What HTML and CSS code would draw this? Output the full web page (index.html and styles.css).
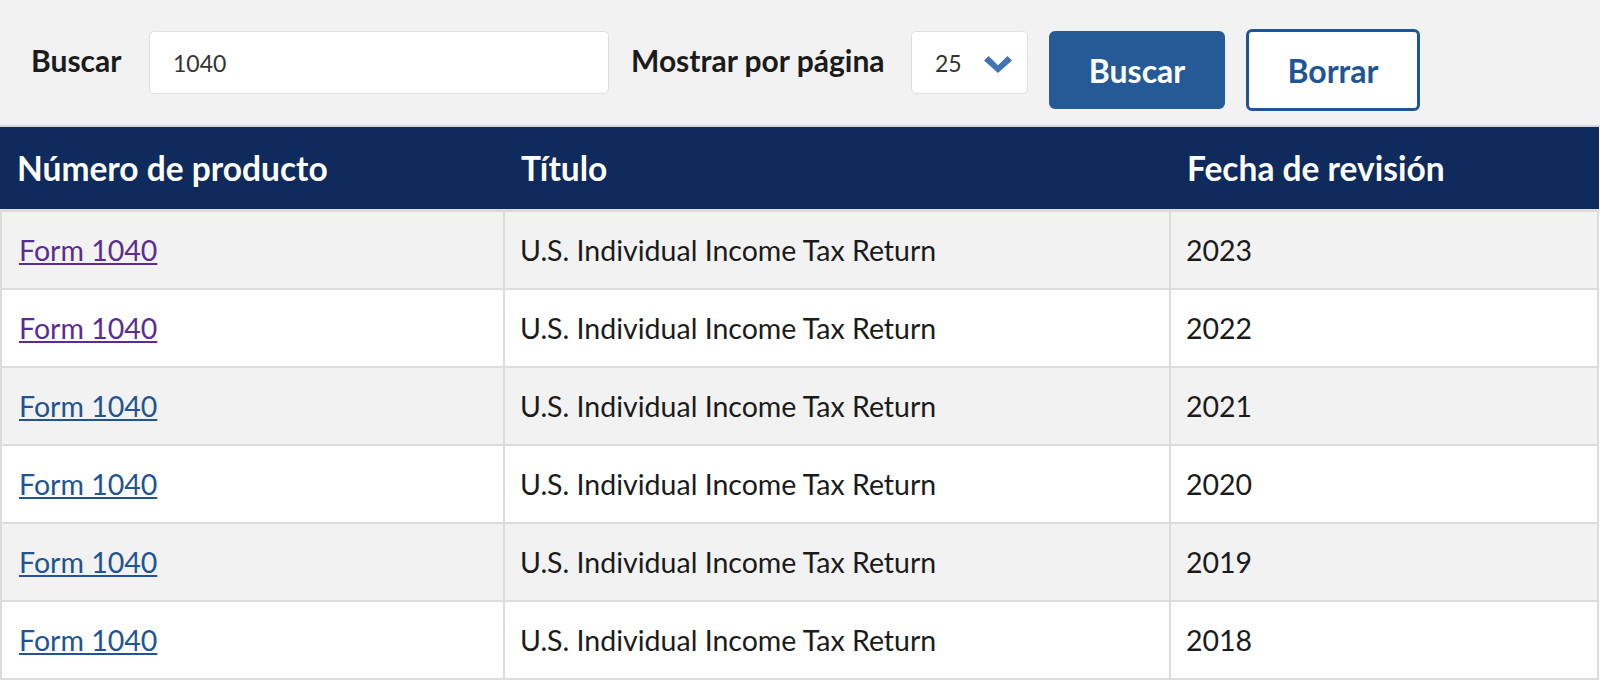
FILE: index.html
```html
<!DOCTYPE html>
<html lang="es">
<head>
<meta charset="utf-8">
<title>Búsqueda de formularios</title>
<link rel="stylesheet" href="styles.css">
</head>
<body>
<form class="toolbar">
  <label class="lbl lbl-search" for="q">Buscar</label>
  <div class="field field-search"><span class="field-text" id="q">1040</span></div>
  <label class="lbl lbl-per">Mostrar por página</label>
  <div class="field field-select">
    <span class="field-text">25</span>
    <svg class="chev" width="28" height="17" viewBox="0 0 28 17"><polygon points="0,4.5 4.5,0 14,9.2 23.5,0 28,4.5 14,17" fill="#4273b4"/></svg>
  </div>
  <button type="button" class="btn btn-primary">Buscar</button>
  <button type="button" class="btn btn-outline">Borrar</button>
</form>
<table class="results">
  <colgroup><col class="c1"><col class="c2"><col class="c3"></colgroup>
  <thead>
    <tr><th>Número de producto</th><th>Título</th><th>Fecha de revisión</th></tr>
  </thead>
  <tbody>
    <tr><td><a class="visited" href="#">Form 1040</a></td><td>U.S. Individual Income Tax Return</td><td>2023</td></tr>
    <tr><td><a class="visited" href="#">Form 1040</a></td><td>U.S. Individual Income Tax Return</td><td>2022</td></tr>
    <tr><td><a href="#">Form 1040</a></td><td>U.S. Individual Income Tax Return</td><td>2021</td></tr>
    <tr><td><a href="#">Form 1040</a></td><td>U.S. Individual Income Tax Return</td><td>2020</td></tr>
    <tr><td><a href="#">Form 1040</a></td><td>U.S. Individual Income Tax Return</td><td>2019</td></tr>
    <tr><td><a href="#">Form 1040</a></td><td>U.S. Individual Income Tax Return</td><td>2018</td></tr>
  </tbody>
</table>
</body>
</html>
```
FILE: styles.css
```css
html, body {
  margin: 0;
  padding: 0;
  background: #ffffff;
  font-family: "Lato", "Open Sans", sans-serif;
  color: #1b1b1b;
}
.toolbar {
  display: flex;
  align-items: flex-start;
  height: 127px;
  box-sizing: border-box;
  padding: 31px 0 0 31px;
  background: #f2f2f2;
  border-bottom: 2px solid #d6d6d6;
  margin: 0;
}
.lbl {
  font-weight: 700;
  font-size: 30px;
  line-height: 58px;
  color: #1b1b1b;
}
.lbl-search { width: 118px; }
.lbl-per { width: 280px; margin-left: 22px; }
.field {
  box-sizing: border-box;
  height: 63px;
  background: #fff;
  border: 1px solid #e0e0e0;
  border-radius: 5px;
  display: flex;
  align-items: center;
  padding-left: 23px;
}
.field-text {
  font-size: 23px;
  color: #333;
}
.field-search { width: 460px; }
.field-select {
  width: 117px;
  justify-content: space-between;
  padding-right: 15px;
}
.chev { display: block; margin-top: 4px; }
.btn {
  box-sizing: border-box;
  font-family: inherit;
  font-weight: 700;
  font-size: 32px;
  border-radius: 6px;
  cursor: pointer;
  padding: 0;
}
.btn-primary {
  width: 176px;
  height: 78px;
  margin-left: 21px;
  background: #265a97;
  border: 2px solid #265a97;
  color: #fff;
}
.btn-outline {
  width: 174px;
  height: 82px;
  margin-left: 21px;
  margin-top: -2px;
  background: #fff;
  border: 3px solid #1f5594;
  color: #1f5594;
}
.results {
  width: 1599px;
  table-layout: fixed;
  border-collapse: separate;
  border-spacing: 0;
}
.c1 { width: 505px; }
.c2 { width: 666px; }
.c3 { width: 428px; }
.results th {
  background: #0f2a5c;
  color: #fff;
  font-weight: 700;
  font-size: 33.5px;
  text-align: left;
  height: 82px;
  padding: 0 16px;
  border-bottom: 3px solid #dcdcdc;
}
.results th:first-child { padding-left: 17px; }
.results td {
  height: 76px;
  padding: 0 15px;
  font-size: 28.5px;
  color: #1b1b1b;
  border-bottom: 2px solid #dcdcdc;
  border-right: 2px solid #dcdcdc;
}
.results td:first-child { border-left: 2px solid #dcdcdc; padding-left: 17px; }
.results tbody tr:nth-child(odd) td { background: #f2f2f2; }
.results tbody tr:nth-child(even) td { background: #fff; }
.results a { color: #205493; }
.results a.visited { color: #5a2d93; }
```
